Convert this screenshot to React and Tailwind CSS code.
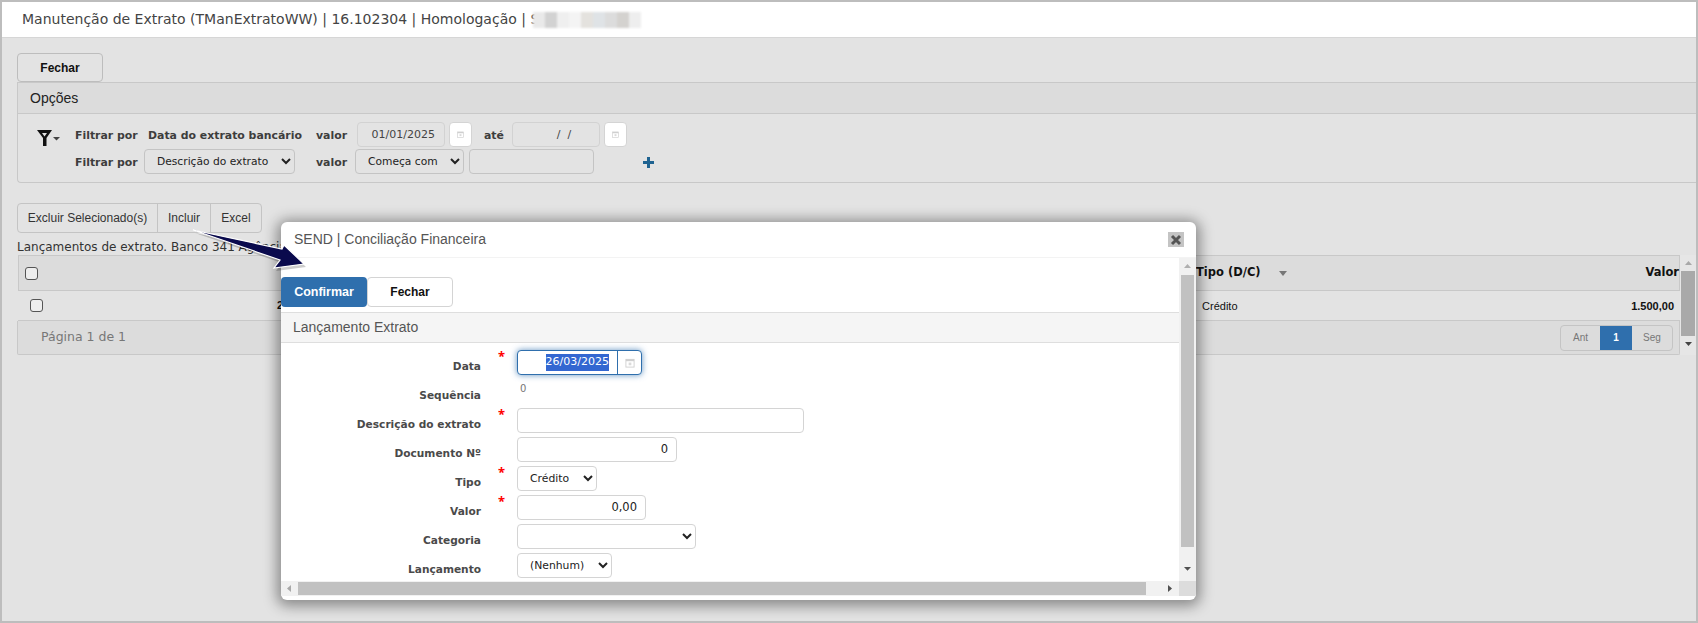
import React from 'react';

const verdana = 'font-["DejaVu_Sans",Verdana,sans-serif]';
const arial = 'font-["Liberation_Sans",Arial,sans-serif]';

function CalendarIcon({ size = 10 }) {
    return (
        <svg width={size} height={size} viewBox="0 0 11 11" fill="none">
            <rect x="1" y="1.5" width="9" height="8.5" stroke="#cfcfcf" />
            <rect x="1" y="1.5" width="9" height="2" fill="#cfcfcf" />
            <rect x="4" y="5" width="3" height="3" fill="#dadada" />
        </svg>
    );
}

function CalendarButton() {
    return (
        <div className="flex h-[25px] w-[23px] items-center justify-center rounded-[4px] border border-[#d4d4d4] bg-white">
            <CalendarIcon size={7} />
        </div>
    );
}

function GrayInput({ value, className }) {
    return (
        <div className={`flex h-[25px] items-center rounded-[4px] border border-[#d2d2d2] bg-[#e3e3e3] pt-[2px] text-[11px] text-[#444] ${verdana} ${className}`}>
            {value}
        </div>
    );
}

function GraySelect({ value, className }) {
    return (
        <select defaultValue={value} className={`h-[25px] rounded-[4px] border border-[#c4c4c4] bg-[#e3e3e3] pl-[8px] text-[10.7px] text-[#222] ${verdana} ${className}`}>
            <option>{value}</option>
        </select>
    );
}

function FilterBar() {
    const label = `text-[10.9px] font-bold text-[#3d3d3d] ${verdana}`;
    return (
        <div className="ml-[15px] h-[101px] rounded-bl-[4px] border border-r-0 border-[#c8c8c8]">
            <div className={`flex h-[31px] items-center border-b border-[#c8c8c8] bg-[#dcdcdc] pl-[12px] text-[14px] text-[#222] ${arial}`}>
                Opções
            </div>
            <div className="flex">
                <svg width="23" height="17" viewBox="0 0 23 17" className="ml-[19px] mt-[16px] mr-[5px]">
                    <path fillRule="evenodd" d="M0 0h15L9.5 8v8H6V8zM5 3h5L7.500 6.500z" fill="#111" />
                    <path d="M16 7h7l-3.500 3.500z" fill="#444" />
                </svg>
                <div className="ml-[10px]">
                    <div className="mt-[8px] flex h-[25px] items-center">
                        <span className={`w-[73px] pt-[3px] ${label}`}>Filtrar por</span>
                        <span className={`w-[168px] pt-[3px] ${label}`}>Data do extrato bancário</span>
                        <span className={`w-[41px] pt-[3px] ${label}`}>valor</span>
                        <GrayInput value="01/01/2025" className="w-[88px] justify-end pr-[9px]" />
                        <div className="ml-[4px]"><CalendarButton /></div>
                        <span className={`ml-[12px] w-[28px] pt-[3px] ${label}`}>até</span>
                        <GrayInput value="/  /" className="w-[88px] justify-center whitespace-pre pl-[16px]" />
                        <div className="ml-[4px]"><CalendarButton /></div>
                    </div>
                    <div className="mt-[2px] flex h-[25px] items-center">
                        <span className={`w-[69px] pt-[3px] ${label}`}>Filtrar por</span>
                        <GraySelect value="Descrição do extrato" className="w-[151px]" />
                        <span className={`ml-[21px] w-[39px] pt-[3px] ${label}`}>valor</span>
                        <GraySelect value="Começa com" className="w-[109px]" />
                        <div className="ml-[5px] h-[25px] w-[125px] rounded-[4px] border border-[#c4c4c4]"></div>
                        <svg width="11" height="11" viewBox="0 0 11 11" className="ml-[49px] mt-[2px]">
                            <path d="M4 0h3v4h4v3H7v4H4V7H0V4h4z" fill="#1f6391" />
                        </svg>
                    </div>
                </div>
            </div>
        </div>
    );
}

function ResultTable() {
    return (
        <div className="ml-[15px]">
            <div className={`mt-[20px] flex h-[30px] w-[245px] rounded-[4px] border border-[#c4c4c4] text-[12px] text-[#333] ${arial}`}>
                <div className="flex w-[140px] items-center justify-center border-r border-[#c4c4c4]">Excluir Selecionado(s)</div>
                <div className="flex w-[53px] items-center justify-center border-r border-[#c4c4c4]">Incluir</div>
                <div className="flex flex-1 items-center justify-center">Excel</div>
            </div>
            <div className={`mt-[7px] h-[15px] text-[12px] leading-[15px] text-[#333] ${verdana}`}>
                Lançamentos de extrato. Banco 341 Agência 0000
            </div>
            <div className="flex">
                <div className="w-[1664px]">
                    <div className="ml-[1px] flex h-[36px] items-center border border-[#c8c8c8] bg-[#dcdcdc] pl-[6px]">
                        <div className="h-[13px] w-[13px] rounded-[3px] border border-[#555] bg-[#eee]"></div>
                        <span className={`ml-[1158px] w-[83px] text-[11.5px] font-bold text-[#111] ${verdana}`}>Tipo (D/C)</span>
                        <svg width="8" height="5" viewBox="0 0 8 5"><path d="M0 0h8L4 5z" fill="#777" /></svg>
                        <span className={`ml-auto text-[11.5px] font-bold text-[#111] ${verdana}`}>Valor</span>
                    </div>
                    <div className={`ml-[1px] flex h-[30px] items-center border-b border-[#c8c8c8] pl-[12px] text-[11px] text-[#111] ${arial}`}>
                        <div className="h-[13px] w-[13px] rounded-[3px] border border-[#555] bg-[#eee]"></div>
                        <span className="ml-[234px] font-bold">26/03/2025</span>
                        <span className="ml-[870px] pt-[2px]">Crédito</span>
                        <span className="ml-auto pr-[6px] pt-[2px] font-bold">1.500,00</span>
                    </div>
                    <div className="flex h-[34px] items-center justify-between rounded-b-[2px] border-b border-l border-r border-[#c8c8c8] bg-[#dcdcdc] pl-[23px] pr-[6px]">
                        <span className={`text-[12.5px] text-[#777] ${verdana}`}>Página 1 de 1</span>
                        <div className={`flex h-[26px] w-[113px] overflow-hidden rounded-[4px] border border-[#c4c4c4] text-[10px] text-[#777] ${arial}`}>
                            <div className="flex w-[39px] items-center justify-center">Ant</div>
                            <div className="flex w-[32px] items-center justify-center bg-[#2f6fad] font-bold text-white">1</div>
                            <div className="flex flex-1 items-center justify-center">Seg</div>
                        </div>
                    </div>
                </div>
                <div className="flex h-[100px] w-[16px] flex-col items-center bg-[#e6e6e6]">
                    <svg width="9" height="16" viewBox="0 0 9 16"><path d="M1 10h7L4.500 6z" fill="#a8a8a8" /></svg>
                    <div className="h-[65px] w-[14px] bg-[#a9a9a9]"></div>
                    <svg width="9" height="16" viewBox="0 0 9 16"><path d="M1 6h7L4.500 10z" fill="#444" /></svg>
                </div>
            </div>
        </div>
    );
}

function FormRow({ label, required, children, labelClass = 'pt-[9px]' }) {
    return (
        <div className="flex h-[29px] items-start">
            <div className={`w-[200px] text-right text-[10.6px] leading-[14px] font-bold text-[#4a4a4a] ${verdana} ${labelClass}`}>{label}</div>
            <div className="w-[36px] pl-[17px] text-[13px] leading-[13px] font-bold text-[#f00]">{required ? '*' : ''}</div>
            {children}
        </div>
    );
}

function WhiteInput({ value, className }) {
    return (
        <div className={`flex h-[25px] items-center justify-end rounded-[4px] border border-[#d4d4d4] bg-white pr-[8px] text-[11.5px] text-[#222] ${verdana} ${className}`}>
            {value}
        </div>
    );
}

function WhiteSelect({ value, className }) {
    return (
        <select defaultValue={value} className={`h-[25px] rounded-[4px] border border-[#d4d4d4] bg-white pl-[8px] text-[10.8px] text-[#222] ${verdana} ${className}`}>
            <option>{value}</option>
        </select>
    );
}

function Modal() {
    return (
        <div className="absolute left-[279px] top-[220px] flex h-[378px] w-[915px] flex-col overflow-hidden rounded-[6px] bg-white shadow-[0_2px_14px_4px_rgba(0,0,0,0.4)]">
            <div className="flex h-[36px] shrink-0 items-center justify-between border-b border-[#f3f3f3] pl-[13px] pr-[12px]">
                <span className={`text-[14px] text-[#555] ${arial}`}>SEND | Conciliação Financeira</span>
                <div className="flex h-[15px] w-[16px] items-center justify-center bg-[#c4c4c4]">
                    <svg width="12" height="12" viewBox="0 0 12 12"><path d="M2 2l8 8M10 2l-8 8" stroke="#555" strokeWidth="3" /></svg>
                </div>
            </div>
            <div className="flex min-h-0 flex-1">
                <div className="flex w-[898px] flex-col overflow-hidden">
                    <div className={`mt-[19px] flex shrink-0 text-[12px] font-bold ${arial}`}>
                        <div className="flex h-[30px] w-[86px] items-center justify-center rounded-[4px] bg-[#2f6fad] text-[12.5px] text-white">Confirmar</div>
                        <div className="flex h-[30px] w-[86px] items-center justify-center rounded-[4px] border border-[#d4d4d4] bg-white text-[#111]">Fechar</div>
                    </div>
                    <div className={`mt-[5px] flex h-[31px] shrink-0 items-center border-t border-b border-[#dedede] bg-[#f5f5f5] pl-[12px] text-[14px] text-[#555] ${arial}`}>
                        Lançamento Extrato
                    </div>
                    <div className="pt-[7px]">
                        <FormRow label="Data" required>
                            <div className={`flex h-[25px] w-[125px] rounded-[4px] border border-[#2f6fad] bg-white text-[11px] shadow-[0_0_6px_rgba(47,111,173,0.75)] ${verdana}`}>
                                <div className="flex w-[100px] items-center justify-end border-r border-[#2f6fad] pr-[8px]">
                                    <span className="bg-[#3367d1] text-white">26/03/2025</span>
                                </div>
                                <div className="flex flex-1 items-center justify-center"><CalendarIcon /></div>
                            </div>
                        </FormRow>
                        <FormRow label="Sequência">
                            <span className={`pl-[3px] pt-[2px] text-[10px] text-[#777] ${verdana}`}>0</span>
                        </FormRow>
                        <FormRow label="Descrição do extrato" required>
                            <WhiteInput className="w-[287px]" />
                        </FormRow>
                        <FormRow label="Documento Nº">
                            <WhiteInput value="0" className="w-[160px]" />
                        </FormRow>
                        <FormRow label="Tipo" required>
                            <WhiteSelect value="Crédito" className="w-[80px]" />
                        </FormRow>
                        <FormRow label="Valor" required>
                            <WhiteInput value="0,00" className="w-[129px]" />
                        </FormRow>
                        <FormRow label="Categoria">
                            <WhiteSelect value="" className="w-[179px]" />
                        </FormRow>
                        <FormRow label="Lançamento">
                            <WhiteSelect value="(Nenhum)" className="w-[95px]" />
                        </FormRow>
                    </div>
                </div>
                <div className="flex w-[17px] flex-col items-center bg-[#f1f1f1]">
                    <svg width="9" height="17" viewBox="0 0 9 17"><path d="M1 10h7L4.500 6z" fill="#b0b0b0" /></svg>
                    <div className="h-[274px] w-[13px] bg-[#c1c1c1]"></div>
                    <svg width="9" height="34" viewBox="0 0 9 34"><path d="M1 20h7L4.500 24z" fill="#505050" /></svg>
                </div>
            </div>
            <div className="mb-[4px] flex h-[15px] shrink-0 items-center bg-[#f1f1f1]">
                <svg width="17" height="15" viewBox="0 0 17 15"><path d="M10 4v7L6 7.500z" fill="#a8a8a8" /></svg>
                <div className="h-[13px] w-[848px] bg-[#c1c1c1]"></div>
                <svg width="33" height="15" viewBox="0 0 33 15"><path d="M22 4v7l4-3.500z" fill="#505050" /></svg>
                <div className="h-[15px] flex-1 bg-[#dcdcdc]"></div>
            </div>
        </div>
    );
}

function Arrow() {
    return (
        <svg width="130" height="60" viewBox="0 0 130 60" className="absolute left-[180px] top-[224px]">
            <path d="M11 4L100 23L102 19L122 38L92 42L98 34Z" fill="#000" opacity="0.2" transform="translate(2 3)" />
            <path d="M11 4L100 23L102 19L122 38L92 42L98 34Z" fill="#0a0a4d" stroke="#fff" strokeWidth="1.2" strokeLinejoin="miter" />
        </svg>
    );
}

export default function App() {
    const mosaic = ['#e9e9e9', '#d2d2d2', '#efefef', '#f4f4f4', '#e4e2de', '#dfe3e6', '#dcdcdc', '#d4d2cf', '#eeeeee'];
    return (
        <div className="relative h-[623px] w-[1698px] overflow-hidden border-2 border-[#bdbdbd] bg-[#e3e3e3]">
            <div className={`flex h-[36px] items-center border-b border-[#d6d6d6] bg-white pl-[20px] text-[14px] text-[#444] ${verdana}`}>
                <span>Manutenção de Extrato (TManExtratoWW) | 16.102304 | Homologação | S</span>
                <div className="-ml-[6px] flex h-[16px] w-[108px] blur-[1px]">
                    {mosaic.map((color, index) => (
                        <div key={index} className="h-full w-[12px]" style={{ backgroundColor: color }}></div>
                    ))}
                </div>
            </div>
            <div className={`ml-[15px] mt-[15px] flex h-[29px] w-[86px] items-center justify-center rounded-[4px] border border-[#bdbdbd] text-[12px] font-bold text-[#111] ${arial}`}>
                Fechar
            </div>
            <FilterBar />
            <ResultTable />
            <Modal />
            <Arrow />
        </div>
    );
}
